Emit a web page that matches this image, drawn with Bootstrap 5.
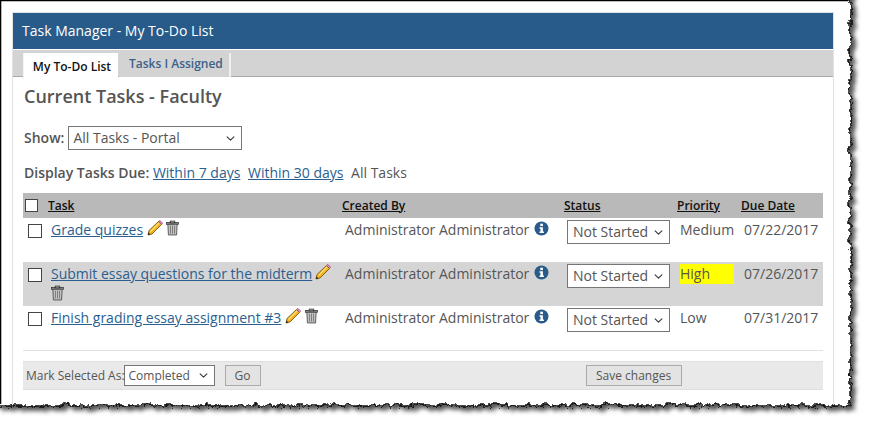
<!doctype html>
<html lang="en">
<head>
<meta charset="utf-8">
<title>Task Manager</title>
<link href="https://cdn.jsdelivr.net/npm/bootstrap@5.3.0/dist/css/bootstrap.min.css" rel="stylesheet">
<style>
html,body{background:#fff;margin:0;height:427px;overflow:hidden}
body{font-family:"Open Sans","Liberation Sans",sans-serif;font-size:14px;color:#555;line-height:20px;position:relative}
.tear{position:absolute;left:0;top:0;width:870px;height:427px;z-index:0}
.sheet{position:relative;z-index:1;margin:12px 0 0 12px;width:822px;height:393px;border:solid #e2e2e2;border-width:1px 1px 0 1px}
.titlebar{background:#285b8a;color:#fff;height:36px;line-height:36px;padding-left:9px}
.tabstrip{background:#d3d3d3;height:27px;margin-top:1px;border-bottom:1px solid #a8a8a8;padding-left:10px;gap:0}
.tabstrip a{display:block;font-size:12px;font-weight:600;text-decoration:none;line-height:21px}
.tab-on{background:#fff;color:#111;height:27px;width:95px;margin-top:3px;text-align:center;padding:3px 0 0 2px;border-left:1px solid #f4f4f4;position:relative}
.tab-off{color:#3d6288;height:24px;margin-top:3px;padding:0 8px 0 10px;width:112px;white-space:nowrap;border-right:2px solid #f0f0f0;background:#d3d3d3;margin-left:1px}
.pane{padding:0 10px}
.pagehead{font-size:18px;font-weight:600;line-height:24px;color:#555;margin:7px 0 0 1px}
.showrow{margin:18px 0 0 1px;height:24px;gap:4px}
.lbl{font-weight:600}
.sel{border:1px solid #767676;border-radius:0;height:24px;padding:0 20px 0 5px;color:#555;font-size:14px;line-height:20px;background-position:right 5px center;background-size:11px 9px;font-family:inherit}
.sel-show{width:174px;padding-left:4px}
.duerow{margin:12px 0 0 1px;height:22px;line-height:22px}
.duerow a{margin-right:4px}
a{color:#2a5f8f}
.tasktable{width:800px;table-layout:fixed;margin:9px 0 0 0;border-collapse:collapse}
.tasktable th,.tasktable td{padding:0;border:0;vertical-align:top;background:transparent;color:#555;font-size:14px;box-shadow:none}
.tasktable thead tr{background:#b9b9b9;height:25px}
.tasktable th{font-size:12px;vertical-align:middle}
.tasktable th a{color:#111;font-weight:600}
.tasktable tbody tr{height:44px}
.tasktable tbody tr.alt{background:#d5d5d5}
.chk{appearance:none;display:block;width:14px;height:14px;border:1px solid #444;background:#fff;margin:0}
.headchk{margin-left:2px;width:13px;height:13px}
.rowchk{margin:6px 0 0 5px}
.c-task,.c-by,.c-pri,.c-due{padding:1px 0 0 3px!important;line-height:21px}
.c-stat{padding-top:2px!important;padding-left:3px!important}
.c-pri-hot{padding-top:0!important}
.sel-stat{width:103px;height:24px;margin-top:0}
.hot{background:#ff0;display:block;width:54px;height:20px;line-height:20px;margin-top:2px}
.ico{display:inline-block;vertical-align:-1px}
.pen-tight{margin-left:3px}
.inf-gap{margin-left:1px}
.rule{height:1px;background:#e0e0e0;margin-top:0;width:800px}
.footbar{background:#e9e9e9;border:1px solid #e0e0e0;border-width:1px 0;height:29px;width:800px;margin-top:10px;font-size:12px;position:relative;padding-left:3px}
.sel-mark{width:91px;height:21px;font-size:12px;line-height:18px;background-position:right 5px center;padding-left:4px;margin-left:-1px}
.graybtn{background:#e3e3e3;border:1px solid #aaa;border-radius:0;color:#555;font-size:12px;line-height:18px;height:21px;padding:0 9px}
.gobtn{margin-left:10px;width:36px;padding:0}
.savebtn{margin-left:325px;width:96px;padding:0}
</style>
</head>
<body>
<svg class="tear" viewBox="0 0 870 427" aria-hidden="true">
<defs>
<filter id="torn" x="-5%" y="-5%" width="115%" height="115%" color-interpolation-filters="sRGB">
<feTurbulence type="turbulence" baseFrequency="0.11" numOctaves="3" seed="7" result="n"/>
<feDisplacementMap in="SourceGraphic" in2="n" scale="7" xChannelSelector="R" yChannelSelector="G" result="d"/>
<feGaussianBlur in="d" stdDeviation="2" result="b"/>
<feOffset in="b" dx="4" dy="4" result="o"/>
<feFlood flood-color="#555"/>
<feComposite in2="o" operator="in" result="s"/>
<feMerge><feMergeNode in="s"/><feMergeNode in="d"/></feMerge>
</filter>
</defs>
<rect x="-30" y="-30" width="879" height="434" fill="#fff" stroke="#000" stroke-width="1.4" filter="url(#torn)"/>
<path d="M.5 404V.5H848" fill="none" stroke="#000" stroke-width="1.6"/>
</svg>

<div class="sheet">
  <div class="titlebar">Task Manager - My To-Do List</div>
  <div class="tabstrip d-flex">
    <a class="tab-on" href="#">My To-Do List</a>
    <a class="tab-off" href="#">Tasks I Assigned</a>
  </div>
  <div class="pane">
    <div class="pagehead">Current Tasks - Faculty</div>
    <div class="showrow d-flex align-items-center">
      <span class="lbl">Show:</span>
      <select class="form-select sel sel-show"><option>All Tasks - Portal</option></select>
    </div>
    <div class="duerow"><span class="lbl">Display Tasks Due:</span> <a href="#">Within 7 days</a> <a href="#">Within 30 days</a> All Tasks</div>
    <table class="table tasktable">
      <colgroup><col style="width:25px"><col style="width:294px"><col style="width:222px"><col style="width:113px"><col style="width:64px"><col style="width:82px"></colgroup>
      <thead><tr>
        <th><input type="checkbox" class="chk headchk" aria-label="Select all"></th>
        <th><a href="#">Task</a></th><th><a href="#">Created By</a></th><th><a href="#">Status</a></th><th><a href="#">Priority</a></th><th><a href="#">Due Date</a></th>
      </tr></thead>
      <tbody>
        <tr>
          <td><input type="checkbox" class="chk rowchk" aria-label="Select"></td>
          <td class="c-task"><a href="#">Grade quizzes</a> <svg class="ico" width="16" height="16" viewBox="0 0 16 16"><use href="#pen"/></svg> <svg class="ico" width="13" height="16" viewBox="0 0 14 16"><use href="#bin"/></svg></td>
          <td class="c-by">Administrator Administrator <svg class="ico inf-gap" width="15" height="15" viewBox="0 0 15 15"><use href="#inf"/></svg></td>
          <td class="c-stat"><select class="form-select sel sel-stat"><option>Not Started</option></select></td>
          <td class="c-pri">Medium</td>
          <td class="c-due">07/22/2017</td>
        </tr>
        <tr class="alt">
          <td><input type="checkbox" class="chk rowchk" aria-label="Select"></td>
          <td class="c-task"><a href="#">Submit essay questions for the midterm</a><svg class="ico pen-tight" width="16" height="16" viewBox="0 0 16 16"><use href="#pen"/></svg> <svg class="ico" width="13" height="16" viewBox="0 0 14 16"><use href="#bin"/></svg></td>
          <td class="c-by">Administrator Administrator <svg class="ico inf-gap" width="15" height="15" viewBox="0 0 15 15"><use href="#inf"/></svg></td>
          <td class="c-stat"><select class="form-select sel sel-stat"><option>Not Started</option></select></td>
          <td class="c-pri c-pri-hot"><span class="hot">High</span></td>
          <td class="c-due">07/26/2017</td>
        </tr>
        <tr>
          <td><input type="checkbox" class="chk rowchk" aria-label="Select"></td>
          <td class="c-task"><a href="#">Finish grading essay assignment #3</a> <svg class="ico" width="16" height="16" viewBox="0 0 16 16"><use href="#pen"/></svg> <svg class="ico" width="13" height="16" viewBox="0 0 14 16"><use href="#bin"/></svg></td>
          <td class="c-by">Administrator Administrator <svg class="ico inf-gap" width="15" height="15" viewBox="0 0 15 15"><use href="#inf"/></svg></td>
          <td class="c-stat"><select class="form-select sel sel-stat"><option>Not Started</option></select></td>
          <td class="c-pri">Low</td>
          <td class="c-due">07/31/2017</td>
        </tr>
      </tbody>
    </table>
    <div class="rule"></div>
    <div class="footbar d-flex align-items-center">
      <span>Mark Selected As:</span>
      <select class="form-select sel sel-mark"><option>Completed</option></select>
      <button type="button" class="btn graybtn gobtn">Go</button>
      <button type="button" class="btn graybtn savebtn">Save changes</button>
    </div>
  </div>
</div>

<svg width="0" height="0" class="d-block" aria-hidden="true">
  <defs>
    <g id="pen">
      <path d="M1 15l1-4.500L11.500 1.500 14.500 4.500 5 14z" fill="#f5b21c" stroke="#6b4a05" stroke-width=".8"/>
      <path d="M3.500 11.500l8.500-8.500" stroke="#fde27a" stroke-width="1.200"/>
      <path d="M11.500 1.500l1.300-1.200 3 3-1.300 1.200z" fill="#ee7fc0" stroke="#7a4a66" stroke-width=".6"/>
      <path d="M1 15l.5-2.400 1.900 1.900z" fill="#222"/>
    </g>
    <g id="bin">
      <rect x=".5" y="2" width="13" height="2" fill="#8a8a8a" stroke="#222" stroke-width=".7"/>
      <rect x="4.500" y=".5" width="5" height="2" fill="#aaa" stroke="#222" stroke-width=".7"/>
      <path d="M2 4h10l-.6 11.500H2.600z" fill="#c4c4c4" stroke="#333" stroke-width=".8"/>
      <path d="M4.800 5.500v8.500M7 5.500v8.500M9.200 5.500v8.500" stroke="#777" stroke-width="1"/>
    </g>
    <g id="inf">
      <circle cx="7.500" cy="7.500" r="7" fill="#285b8a"/>
      <rect x="6.300" y="2.700" width="2.600" height="2.400" fill="#fff"/>
      <path d="M5.500 6.200h3.400v4.300h1v1.500H5.500v-1.500h1V7.700h-1z" fill="#fff"/>
    </g>
  </defs>
</svg>
<script src="https://cdn.jsdelivr.net/npm/bootstrap@5.3.0/dist/js/bootstrap.bundle.min.js"></script>
</body>
</html>
